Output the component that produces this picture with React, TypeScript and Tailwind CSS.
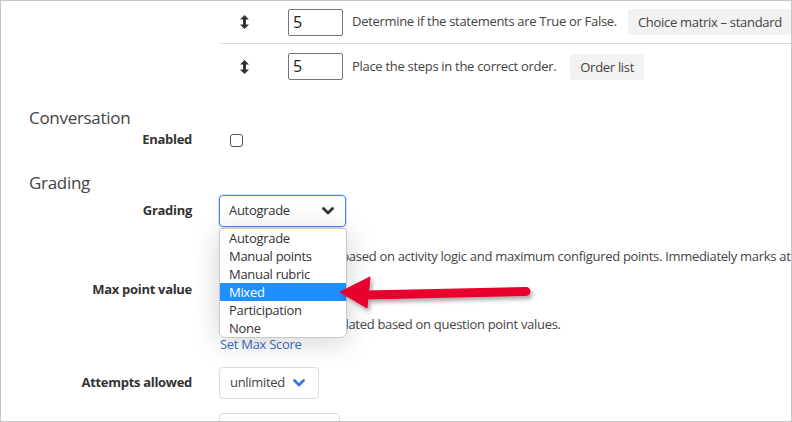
import React from "react";

const SortIcon = () => (
  <svg width="9" height="14" viewBox="0 0 9 14" className="block">
    <polygon points="4.5,0 9,4.5 6,4.5 6,9.5 9,9.5 4.5,14 0,9.5 3,9.5 3,4.5 0,4.5" fill="#333" />
  </svg>
);

const Chevron = ({ color }: { color: string }) => (
  <svg width="12" height="8" viewBox="0 0 12 8" className="block">
    <polyline points="1.5,1.5 6,6 10.5,1.5" fill="none" stroke={color} strokeWidth="2.8" strokeLinecap="round" strokeLinejoin="round" />
  </svg>
);

const Label = ({ children }: { children: React.ReactNode }) => (
  <div className="w-[191px] text-right font-bold text-[13px] text-[#333] shrink-0">{children}</div>
);

export default function App() {
  return (
    <div
      className="relative w-[792px] h-[422px] overflow-hidden bg-white border border-[#c6c6c6] text-[13px] text-[#444] tracking-[-0.3px]"
      style={{ fontFamily: '"Segoe UI", "Open Sans", sans-serif' }}
    >
      {/* table rows */}
      <div className="ml-[219px]">
        <div className="flex items-center h-[43px] border-b border-[#dcdcdc] whitespace-nowrap">
          <div className="w-[68px] pl-[20px] shrink-0"><SortIcon /></div>
          <div className="w-[55px] h-[27px] border border-[#767676] rounded-[2px] text-[16px] leading-[25px] pl-[4px] text-[#222] shrink-0">5</div>
          <div className="ml-[9px]">Determine if the statements are True or False.</div>
          <div className="ml-[11px] px-[10px] h-[26px] leading-[26px] rounded-[4px] bg-[#f2f2f2] text-[#444]">Choice matrix – standard</div>
        </div>
        <div className="flex items-center h-[45px] whitespace-nowrap">
          <div className="w-[68px] pl-[20px] shrink-0"><SortIcon /></div>
          <div className="w-[55px] h-[27px] border border-[#767676] rounded-[2px] text-[16px] leading-[25px] pl-[4px] text-[#222] shrink-0">5</div>
          <div className="ml-[9px]">Place the steps in the correct order.</div>
          <div className="ml-[14px] px-[10px] h-[26px] leading-[26px] rounded-[4px] bg-[#f2f2f2] text-[#444]">Order list</div>
        </div>
      </div>

      {/* Conversation */}
      <div className="mt-[17px] pl-[28px] text-[17px] leading-[24px] text-[#444]">Conversation</div>
      <div className="flex items-center h-[20px]">
        <Label>Enabled</Label>
        <div className="ml-[38px] w-[13px] h-[13px] border border-[#555] rounded-[3px] bg-white" />
      </div>

      {/* Grading */}
      <div className="mt-[21px] pl-[28px] text-[17px] leading-[24px] text-[#444]">Grading</div>
      <div className="flex items-center h-[32px]">
        <Label>Grading</Label>
        <div className="ml-[27px] w-[127px] h-[32px] border border-[#4d86e0] rounded-[4px] shadow-[0_0_0_1px_rgba(77,134,224,0.25)] flex items-center justify-between pl-[9px] pr-[11px] text-[#333]">
          <span>Autograde</span>
          <Chevron color="#333" />
        </div>
      </div>
      <div className="mt-[20px] ml-[228px] leading-[18px] whitespace-nowrap">
        Grade is calculated based on activity logic and maximum configured points. Immediately marks attempts as graded.
      </div>
      <div className="mt-[9px] flex items-center h-[32px]">
        <Label>Max point value</Label>
      </div>
      <div className="mt-[9px] ml-[236px] leading-[18px] whitespace-nowrap">
        Max points is calculated based on question point values.
      </div>
      <div className="mt-[2px] ml-[219px] leading-[18px] text-[#3b6fc8]">Set Max Score</div>
      <div className="mt-[14px] flex items-center h-[32px]">
        <Label>Attempts allowed</Label>
        <div className="ml-[27px] w-[100px] h-[32px] border border-[#dcdcdc] rounded-[4px] flex items-center justify-between pl-[10px] pr-[13px] text-[#444]">
          <span>unlimited</span>
          <Chevron color="#3a78d8" />
        </div>
      </div>
      <div className="mt-[14px] ml-[218px] w-[121px] h-[32px] border border-[#dcdcdc] rounded-[4px]" />

      {/* Dropdown list overlay */}
      <div className="absolute left-[218px] top-[227px] w-[128px] bg-white border border-[#c8c8c8] rounded-b-[6px] rounded-t-[3px] shadow-[0_4px_28px_rgba(0,0,0,0.18)] overflow-hidden text-[13px] text-[#333]">
        {["Autograde", "Manual points", "Manual rubric", "Mixed", "Participation", "None"].map((o) => (
          <div
            key={o}
            className={
              o === "Mixed"
                ? "h-[18px] leading-[18px] pl-[9px] bg-[#1e8fff] text-white"
                : "h-[18px] leading-[18px] pl-[9px]"
            }
          >
            {o}
          </div>
        ))}
      </div>

      {/* Red arrow */}
      <svg className="absolute left-[330px] top-[268px]" width="220" height="50" viewBox="330 268 220 50">
        <defs>
          <filter id="sh" x="-10%" y="-50%" width="130%" height="200%">
            <feDropShadow dx="2" dy="3" stdDeviation="2" floodColor="#000" floodOpacity="0.35" />
          </filter>
        </defs>
        <g filter="url(#sh)" fill="#e8002e" stroke="#e8002e">
          <line x1="366" y1="294" x2="525" y2="290.5" strokeWidth="9" strokeLinecap="round" />
          <polygon points="339,291 369,276 366,307" strokeWidth="1" strokeLinejoin="round" />
        </g>
      </svg>
    </div>
  );
}
